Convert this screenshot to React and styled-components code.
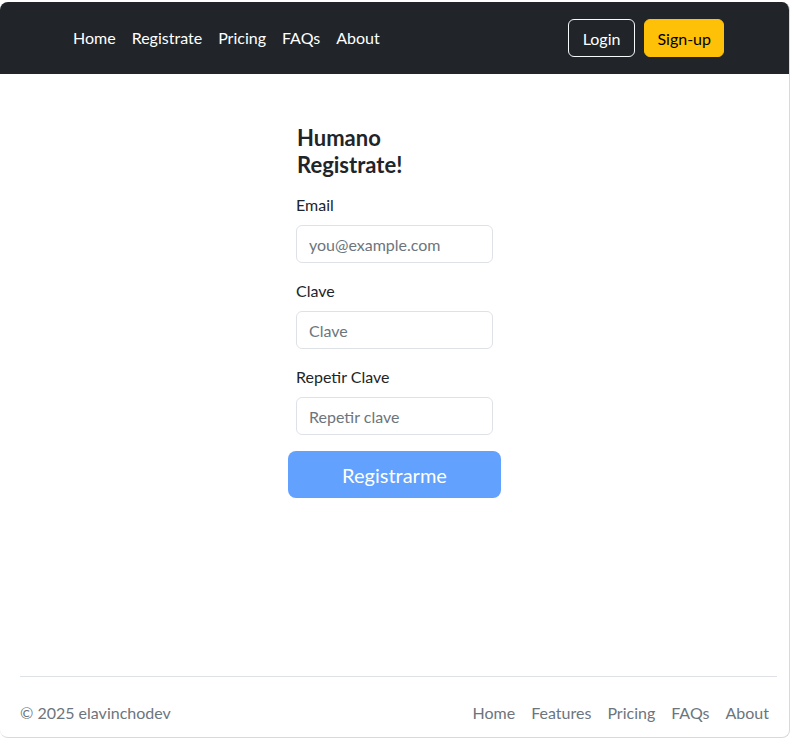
import styled, { createGlobalStyle } from "styled-components";

const Global = createGlobalStyle`
  html, body { margin: 0; padding: 0; background: #ffffff; }
  body { font-family: "Lato", "Open Sans", sans-serif; color: #212529; }
  * { box-sizing: border-box; }
`

const Frame = styled.div`
  margin-top: 2px;
  width: 790px;
  height: 736px;
  border-right: 1px solid #d9d9d9;
  border-bottom: 1px solid #d9d9d9;
  border-radius: 8px;
  overflow: hidden;
  display: flex;
  flex-direction: column;
  background: #fff;
`

const Navbar = styled.header`
  height: 72px;
  background: #212529;
  display: flex;
  align-items: center;
  padding: 0 65px 0 65px;
`

const NavLinks = styled.nav`
  display: flex;
  flex: 1;
  margin-top: -2px;
`

const NavLink = styled.a`
  color: #fff;
  font-size: 16px;
  padding: 0 8px;
  text-decoration: none;
`

const NavButton = styled.button`
  height: 38px;
  padding: 0 ${p => p.$primary ? "12px" : "14px"};
  font-family: inherit;
  font-size: 16px;
  border-radius: 6px;
  cursor: pointer;
  border: 1px solid ${p => p.$primary ? "#ffc107" : "#f8f9fa"};
  background: ${p => p.$primary ? "#ffc107" : "transparent"};
  color: ${p => p.$primary ? "#000" : "#fff"};
  margin-left: ${p => p.$primary ? "9px" : "0"};
`

const Main = styled.main`
  flex: 1;
  display: flex;
  justify-content: center;
  padding-top: 50px;
`

const Form = styled.form`
  width: 213px;
  display: flex;
  flex-direction: column;
`

const Title = styled.h1`
  margin: 0 0 15px 9px;
  font-size: 22px;
  line-height: 27px;
  font-weight: 700;
`

const Field = styled.div`
  padding: 0 8px;
  margin-bottom: 16px;
`

const Label = styled.label`
  display: block;
  font-size: 16px;
  line-height: 24px;
  margin-bottom: 8px;
`

const Input = styled.input`
  display: block;
  width: 197px;
  height: 38px;
  padding: 6px 12px;
  font-family: inherit;
  font-size: 16px;
  color: #212529;
  border: 1px solid #dee2e6;
  border-radius: 6px;
  outline: 0;
  &::placeholder { color: #6c757d; }
`

const Submit = styled.button`
  height: 47px;
  border: none;
  border-radius: 8px;
  background: #62a1fe;
  color: #fff;
  font-family: inherit;
  font-size: 20px;
`

const Footer = styled.footer`
  margin: 0 12px 0 20px;
  border-top: 1px solid #dee2e6;
  height: 61px;
  display: flex;
  align-items: center;
  justify-content: space-between;
  padding-top: 10px;
  color: #6c757d;
  font-size: 16px;
`

const FootLinks = styled.nav`
  display: flex;
`

const FootLink = styled.a`
  color: #6c757d;
  text-decoration: none;
  padding: 0 8px;
`

export default function App() {
  return (
    <>
      <Global />
      <Frame>
        <Navbar>
          <NavLinks>
            {["Home", "Registrate", "Pricing", "FAQs", "About"].map(l => (
              <NavLink key={l} href="#">{l}</NavLink>
            ))}
          </NavLinks>
          <NavButton>Login</NavButton>
          <NavButton $primary>Sign-up</NavButton>
        </Navbar>
        <Main>
          <Form onSubmit={e => e.preventDefault()}>
            <Title>Humano<br />Registrate!</Title>
            <Field>
              <Label>Email</Label>
              <Input type="email" placeholder="you@example.com" />
            </Field>
            <Field>
              <Label>Clave</Label>
              <Input type="password" placeholder="Clave" />
            </Field>
            <Field>
              <Label>Repetir Clave</Label>
              <Input type="password" placeholder="Repetir clave" />
            </Field>
            <Submit disabled>Registrarme</Submit>
          </Form>
        </Main>
        <Footer>
          <span>© 2025 elavinchodev</span>
          <FootLinks>
            {["Home", "Features", "Pricing", "FAQs", "About"].map(l => (
              <FootLink key={l} href="#">{l}</FootLink>
            ))}
          </FootLinks>
        </Footer>
      </Frame>
    </>
  )
}
